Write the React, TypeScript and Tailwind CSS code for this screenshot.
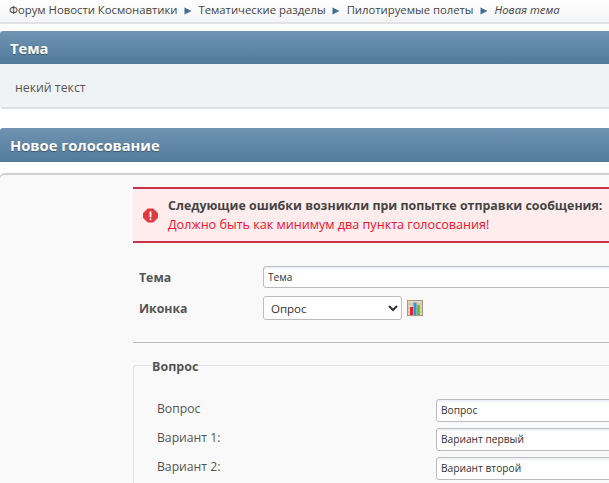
import React from 'react';

const Arrow = () => (
  <svg width="8" height="8" viewBox="0 0 8 8" className="mx-[6.5px] shrink-0">
    <path d="M0.5 0.5 L7.5 4 L0.5 7.5 Z" fill="#3f6f96" />
  </svg>
);

const TitleBar = ({ text, tall }: { text: string; tall?: boolean }) => (
  <div
    className={`flex items-center pl-[10px] pt-[1px] rounded-tl-[3px] bg-gradient-to-b from-[#7094b2] to-[#527a9b] text-white font-bold text-[14.7px] [text-shadow:0_1px_1px_rgba(0,0,0,0.35)] ${
      tall ? 'h-[34px]' : 'h-[33px]'
    }`}
  >
    {text}
  </div>
);

const ErrorIcon = () => (
  <svg width="15" height="15" viewBox="0 0 16 16" className="shrink-0">
    <path d="M5 1 H11 L15.5 5.5 V10.5 L11 15 H5 L.5 10.5 V5.5 Z" fill="#e23a3f" strokeLinejoin="round" stroke="#e23a3f" />
    <rect x="7" y="3.5" width="2" height="6.5" rx="0.8" fill="#fff" />
    <rect x="7" y="11" width="2" height="2" rx="0.8" fill="#fff" />
  </svg>
);

const PollIcon = () => (
  <svg width="16" height="16" viewBox="0 0 16 16" className="shrink-0">
    <rect x="0.5" y="0.5" width="15" height="15" fill="#e6d6bd" stroke="#a8977f" />
    <path d="M1 4 H15 M1 8 H15 M1 12 H15" stroke="#cbb99d" />
    <rect x="3" y="7" width="3" height="8" fill="#e8222c" />
    <rect x="6.5" y="2.5" width="3" height="12.5" fill="#2a9ad8" />
    <rect x="10" y="5" width="3" height="10" fill="#6cc22c" />
  </svg>
);

const inputClass =
  'shrink-0 h-[23px] w-[500px] bg-white border border-[#bcbcbc] rounded-[3px] px-[4px] text-[10.2px] text-[#333] shadow-[inset_0_2px_1px_#eef1f6] outline-none';

const PollRow = ({ label, value }: { label: string; value: string }) => (
  <div className="flex items-center h-[29px]">
    <div className="shrink-0 w-[284px] pl-[5px] pb-[3px] text-[12.2px] text-[#555]">{label}</div>
    <input className={inputClass} defaultValue={value} readOnly />
  </div>
);

export default function App() {
  return (
    <div className="w-[609px] h-[483px] overflow-hidden bg-white text-[#444] font-['Open_Sans',sans-serif]">
      <div className="flex items-center h-[24px] pl-[9px] pb-[1px] text-[11.3px] text-[#444] whitespace-nowrap bg-gradient-to-b from-white to-[#f3f4f5] border-b-2 border-[#e2e2e2]">
        <span>Форум Новости Космонавтики</span>
        <Arrow />
        <span>Тематические разделы</span>
        <Arrow />
        <span>Пилотируемые полеты</span>
        <Arrow />
        <span className="italic">Новая тема</span>
      </div>

      <div className="mt-[7px]">
        <TitleBar text="Тема" />
        <div className="h-[45px] pl-[15px] pt-[15px] text-[12.3px] leading-[17px] text-[#555] bg-[#f0f3f6] border-b-2 border-[#e0e0e0] rounded-bl-[4px]">
          некий текст
        </div>
      </div>

      <div className="mt-[19px]">
        <TitleBar text="Новое голосование" tall />
      </div>

      <div className="mt-[11px] h-[400px] pl-[133px] pt-[12px] bg-[#f9f9f9] border-t-2 border-l border-[#d0d0d0] rounded-tl-[6px] -ml-[1px]">
        <div className="w-[600px]">
          <div className="flex items-center gap-[10px] h-[56px] pl-[10px] bg-[#ffeded] border-y-2 border-[#cb3146]">
            <ErrorIcon />
            <div className="leading-[19px] whitespace-nowrap">
              <div className="text-[12.4px] font-bold text-[#444]">Следующие ошибки возникли при попытке отправки сообщения:</div>
              <div className="text-[12.6px] text-[#f0102e]">Должно быть как минимум два пункта голосования!</div>
            </div>
          </div>

          <div className="flex items-center h-[22px] mt-[23px]">
            <div className="shrink-0 w-[130px] pl-[6px] pt-[2px] text-[12.3px] font-bold text-[#555]">Тема</div>
            <input className={`${inputClass} !h-[22px]`} defaultValue="Тема" readOnly />
          </div>
          <div className="flex items-center h-[24px] mt-[8px]">
            <div className="shrink-0 w-[130px] pl-[6px] pt-[2px] text-[12.3px] font-bold text-[#555]">Иконка</div>
            <select className="shrink-0 h-[24px] w-[139px] pl-[3px] bg-white border border-[#bcbcbc] rounded-[3px] text-[11.5px] text-[#333] outline-none">
              <option>Опрос</option>
            </select>
            <div className="ml-[5px]">
              <PollIcon />
            </div>
          </div>

          <div className="mt-[22px] border-t border-[#bdbdbd]" />

          <fieldset className="mt-[11px] pl-[18px] pb-[20px] border border-[#dfdfdf] rounded-[3px]">
            <legend className="px-0 pt-[4px] text-[12.5px] font-bold text-[#555]">Вопрос</legend>
            <div className="pt-[19px]">
              <PollRow label="Вопрос" value="Вопрос" />
              <PollRow label="Вариант 1:" value="Вариант первый" />
              <PollRow label="Вариант 2:" value="Вариант второй" />
            </div>
          </fieldset>
        </div>
      </div>
    </div>
  );
}
